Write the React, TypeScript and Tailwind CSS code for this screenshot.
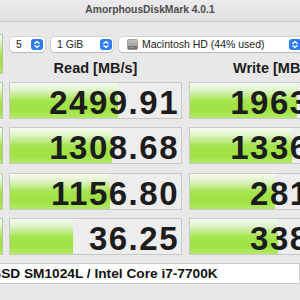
import React from "react";

const GREEN =
  "linear-gradient(to bottom, #f6fbf1 0%, #e3f4cf 18%, #c2ec8d 36%, #a5e44f 50%, #9fe242 78%, #b2e966 100%)";

const rows = [
  { r: "2499.91", rw: 108, w: "1963.24", ww: 107 },
  { r: "1308.68", rw: 102, w: "1336.72", ww: 102 },
  { r: "1156.80", rw: 100, w: "281.46", ww: 85 },
  { r: "36.25", rw: 63, w: "338.15", ww: 88 },
];

function Stepper() {
  return (
    <div className="w-[12px] h-[11px] rounded-[3px] bg-[#2f7df6] flex items-center justify-center shrink-0">
      <svg width="12" height="11" viewBox="0 0 12 11">
        <path d="M3.8 4.4 L6 2.4 L8.2 4.4" fill="none" stroke="white" strokeWidth="1.3" strokeLinecap="round" strokeLinejoin="round" />
        <path d="M3.8 6.6 L6 8.6 L8.2 6.6" fill="none" stroke="white" strokeWidth="1.3" strokeLinecap="round" strokeLinejoin="round" />
      </svg>
    </div>
  );
}

function Disk() {
  return (
    <svg width="11" height="11" viewBox="0 0 11 11" className="shrink-0">
      <defs>
        <linearGradient id="dg" x1="0" y1="0" x2="0" y2="1">
          <stop offset="0" stopColor="#c4c4c4" />
          <stop offset="1" stopColor="#8e8e8e" />
        </linearGradient>
      </defs>
      <rect x="0.5" y="0.5" width="10" height="10" rx="1.2" fill="url(#dg)" stroke="#7a7a7a" strokeWidth="0.6" />
      <rect x="1" y="7" width="9" height="3" rx="0.6" fill="#6f6f6f" />
      <rect x="2" y="8.2" width="5" height="0.7" fill="#a8a8a8" />
    </svg>
  );
}

function Cell({ value, fill, width }: { value: string; fill: number; width: number }) {
  return (
    <div
      className="relative h-[37px] border border-[#c9c9c9] bg-[#ededed] shrink-0 overflow-hidden"
      style={{ width }}
    >
      <div className="absolute left-0 top-0 bottom-0" style={{ width: fill, background: GREEN }} />
      <div className="relative h-full pt-[3px] pr-[2px] text-right text-[33px] leading-[33px] font-bold tracking-[1.5px] text-[#1c1c1c] whitespace-nowrap">
        {value}
      </div>
    </div>
  );
}

export default function App() {
  return (
    <div
      className="w-[300px] h-[300px] overflow-hidden bg-[#e8e8e8] flex flex-col"
      style={{ fontFamily: '"Liberation Sans", Arial, sans-serif' }}
    >
      <div className="h-[22px] shrink-0 border-b border-[#c9c9c9] bg-gradient-to-b from-[#eceaec] to-[#e2e0e2] flex items-center justify-center">
        <span className="text-[10.3px] font-bold text-[#4d4d4d] leading-none">AmorphousDiskMark 4.0.1</span>
      </div>

      <div className="flex flex-col pt-[12px]">
        <div className="flex h-[40px]">
          <div className="w-[3px] h-[40px] border-y border-r border-[#b5c9a0] shrink-0" style={{ background: GREEN }} />
          <div className="ml-[6px] flex flex-col">
            <div className="mt-[3px] ml-px flex gap-[6px] h-[15px] whitespace-nowrap">
              <div className="w-[35px] h-[15px] bg-white rounded-[4px] shadow-[0_0_0_0.5px_rgba(0,0,0,0.18),0_1px_1px_rgba(0,0,0,0.12)] flex items-center pl-[6px] pr-[2px] justify-between">
                <span className="text-[10.5px] text-[#222]">5</span>
                <Stepper />
              </div>
              <div className="w-[62px] h-[15px] bg-white rounded-[4px] shadow-[0_0_0_0.5px_rgba(0,0,0,0.18),0_1px_1px_rgba(0,0,0,0.12)] flex items-center pl-[6px] pr-[1px] justify-between">
                <span className="text-[10.5px] text-[#222]">1 GiB</span>
                <Stepper />
              </div>
              <div className="w-[186px] h-[15px] bg-white rounded-[4px] shadow-[0_0_0_0.5px_rgba(0,0,0,0.18),0_1px_1px_rgba(0,0,0,0.12)] flex items-center pl-[8px] pr-[4px] shrink-0">
                <Disk />
                <span className="ml-[4px] text-[10.5px] text-[#222] flex-1">Macintosh HD (44% used)</span>
                <Stepper />
              </div>
            </div>
            <div className="mt-[8px] flex h-[17px] whitespace-nowrap">
              <div className="w-[173px] text-center text-[14.5px] leading-[17px] font-bold text-[#1c1c1c]">Read [MB/s]</div>
              <div className="ml-[7px] pl-[44px] text-[14.5px] leading-[17px] font-bold text-[#1c1c1c]">Write [MB/s]</div>
            </div>
          </div>
        </div>

        {rows.map((row, i) => (
          <div key={i} className={`flex h-[37px] ${i === 2 ? "mt-[9px]" : "mt-[8px]"}`}>
            <div className="w-[3px] h-[37px] border-y border-r border-[#b5c9a0] shrink-0" style={{ background: GREEN }} />
            <div className="ml-[6px]">
              <Cell value={row.r} fill={row.rw} width={173} />
            </div>
            <div className="ml-[7px]">
              <Cell value={row.w} fill={row.ww} width={174} />
            </div>
          </div>
        ))}

        <div className="mt-[8px] h-[21px] bg-white border-y border-r border-[#c9c9c9] overflow-hidden whitespace-nowrap">
          <div className="ml-[-8px] text-[13.7px] leading-[19px] font-bold text-[#111]">SSD SM1024L / Intel Core i7-7700K</div>
        </div>
      </div>
    </div>
  );
}
